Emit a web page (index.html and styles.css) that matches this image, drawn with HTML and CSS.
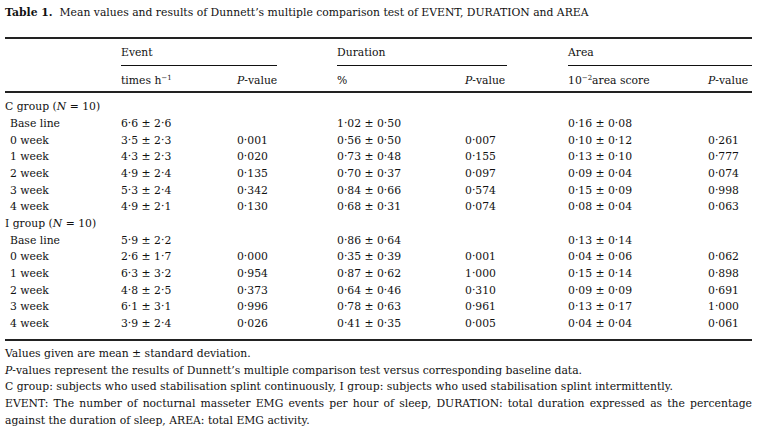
FILE: index.html
```html
<!DOCTYPE html>
<html lang="en">
<head>
<meta charset="utf-8">
<title>Table 1</title>
<link rel="stylesheet" href="styles.css">
</head>
<body>
<div class="page">
  <table class="data">
    <caption><b class="tno">Table 1.</b>Mean values and results of Dunnett’s multiple comparison test of EVENT, DURATION and AREA</caption>
    <colgroup>
      <col class="c-lab">
      <col class="c-ev">
      <col class="c-evp">
      <col class="c-gap1">
      <col class="c-dur">
      <col class="c-durp">
      <col class="c-gap2">
      <col class="c-area">
      <col class="c-areap">
    </colgroup>
    <thead>
      <tr class="h1">
        <th></th>
        <th colspan="2" class="span">Event</th>
        <th></th>
        <th colspan="2" class="span">Duration</th>
        <th></th>
        <th colspan="2" class="span">Area</th>
      </tr>
      <tr class="h2">
        <th></th>
        <th>times h<sup>−1</sup></th>
        <th><i>P</i>-value</th>
        <th></th>
        <th>%</th>
        <th><i>P</i>-value</th>
        <th></th>
        <th>10<sup>−2</sup>area score</th>
        <th><i>P</i>-value</th>
      </tr>
    </thead>
    <tbody>
      <tr class="grp"><td colspan="9">C group (<i>N</i> = 10)</td></tr>
      <tr><td class="lab">Base line</td><td>6·6 ± 2·6</td><td></td><td></td><td>1·02 ± 0·50</td><td></td><td></td><td>0·16 ± 0·08</td><td></td></tr>
      <tr><td class="lab">0 week</td><td>3·5 ± 2·3</td><td>0·001</td><td></td><td>0·56 ± 0·50</td><td>0·007</td><td></td><td>0·10 ± 0·12</td><td>0·261</td></tr>
      <tr><td class="lab">1 week</td><td>4·3 ± 2·3</td><td>0·020</td><td></td><td>0·73 ± 0·48</td><td>0·155</td><td></td><td>0·13 ± 0·10</td><td>0·777</td></tr>
      <tr><td class="lab">2 week</td><td>4·9 ± 2·4</td><td>0·135</td><td></td><td>0·70 ± 0·37</td><td>0·097</td><td></td><td>0·09 ± 0·04</td><td>0·074</td></tr>
      <tr><td class="lab">3 week</td><td>5·3 ± 2·4</td><td>0·342</td><td></td><td>0·84 ± 0·66</td><td>0·574</td><td></td><td>0·15 ± 0·09</td><td>0·998</td></tr>
      <tr><td class="lab">4 week</td><td>4·9 ± 2·1</td><td>0·130</td><td></td><td>0·68 ± 0·31</td><td>0·074</td><td></td><td>0·08 ± 0·04</td><td>0·063</td></tr>
      <tr class="grp"><td colspan="9">I group (<i>N</i> = 10)</td></tr>
      <tr><td class="lab">Base line</td><td>5·9 ± 2·2</td><td></td><td></td><td>0·86 ± 0·64</td><td></td><td></td><td>0·13 ± 0·14</td><td></td></tr>
      <tr><td class="lab">0 week</td><td>2·6 ± 1·7</td><td>0·000</td><td></td><td>0·35 ± 0·39</td><td>0·001</td><td></td><td>0·04 ± 0·06</td><td>0·062</td></tr>
      <tr><td class="lab">1 week</td><td>6·3 ± 3·2</td><td>0·954</td><td></td><td>0·87 ± 0·62</td><td>1·000</td><td></td><td>0·15 ± 0·14</td><td>0·898</td></tr>
      <tr><td class="lab">2 week</td><td>4·8 ± 2·5</td><td>0·373</td><td></td><td>0·64 ± 0·46</td><td>0·310</td><td></td><td>0·09 ± 0·09</td><td>0·691</td></tr>
      <tr><td class="lab">3 week</td><td>6·1 ± 3·1</td><td>0·996</td><td></td><td>0·78 ± 0·63</td><td>0·961</td><td></td><td>0·13 ± 0·17</td><td>1·000</td></tr>
      <tr><td class="lab">4 week</td><td>3·9 ± 2·4</td><td>0·026</td><td></td><td>0·41 ± 0·35</td><td>0·005</td><td></td><td>0·04 ± 0·04</td><td>0·061</td></tr>
    </tbody>
  </table>
  <div class="notes">
    <p class="note">Values given are mean ± standard deviation.</p>
    <p class="note"><i>P</i>-values represent the results of Dunnett’s multiple comparison test versus corresponding baseline data.</p>
    <p class="note">C group: subjects who used stabilisation splint continuously, I group: subjects who used stabilisation splint intermittently.</p>
    <p class="note"><span class="jline">EVENT: The number of nocturnal masseter EMG events per hour of sleep, DURATION: total duration expressed as the percentage</span> against the duration of sleep, AREA: total EMG activity.</p>
  </div>
</div>
</body>
</html>
```

FILE: styles.css
```css
html, body {
  margin: 0;
  padding: 0;
  background: #ffffff;
}

body {
  font-family: "DejaVu Serif", "Liberation Serif", serif;
  font-size: 10.8px;
  line-height: 16.67px;
  color: #111111;
}

.page {
  padding: 5px 0 0 5px;
  width: 747px;
}

.data {
  width: 747px;
  table-layout: fixed;
  border-collapse: separate;
  border-spacing: 0;
}

.data caption {
  text-align: left;
  caption-side: top;
  padding-bottom: 15.3px;
  white-space: nowrap;
}

.tno {
  font-weight: bold;
  margin-right: 7px;
}

.c-lab { width: 116px; }
.c-ev { width: 116px; }
.c-evp { width: 40px; }
.c-gap1 { width: 60px; }
.c-dur { width: 128px; }
.c-durp { width: 42px; }
.c-gap2 { width: 61px; }
.c-area { width: 140px; }
.c-areap { width: 44px; }

.data th,
.data td {
  padding: 0;
  text-align: left;
  vertical-align: top;
  font-weight: normal;
  white-space: nowrap;
}

.h1 th {
  border-top: 2px solid #222222;
  padding-top: 6px;
  padding-bottom: 3px;
}

.h1 th.span {
  border-bottom: 1px solid #111111;
}

.h2 th {
  padding-top: 7px;
  padding-bottom: 2px;
  border-bottom: 2px solid #222222;
}

sup {
  font-size: 7px;
  line-height: 0;
  vertical-align: 4px;
}

.data td.lab {
  padding-left: 5px;
}

.data tbody tr:first-child td {
  padding-top: 6px;
}

.data tbody tr:last-child td {
  padding-bottom: 6.5px;
  border-bottom: 2px solid #222222;
}

.notes {
  padding-top: 4.7px;
}

.note {
  margin: 0;
  text-align: justify;
}

.jline {
  display: block;
  white-space: nowrap;
  text-align-last: justify;
}
```
